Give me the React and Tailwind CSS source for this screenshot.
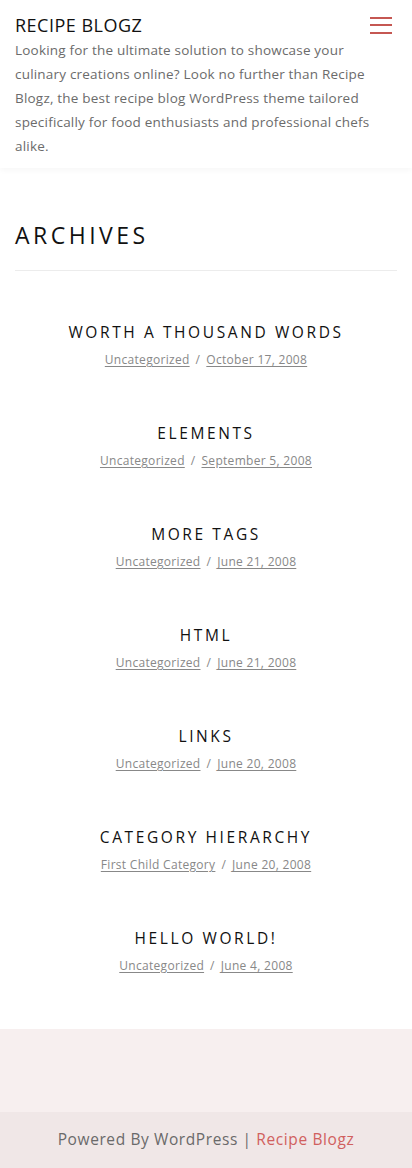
import React from "react";

const posts = [
  { title: "WORTH A THOUSAND WORDS", cat: "Uncategorized", date: "October 17, 2008" },
  { title: "ELEMENTS", cat: "Uncategorized", date: "September 5, 2008" },
  { title: "MORE TAGS", cat: "Uncategorized", date: "June 21, 2008" },
  { title: "HTML", cat: "Uncategorized", date: "June 21, 2008" },
  { title: "LINKS", cat: "Uncategorized", date: "June 20, 2008" },
  { title: "CATEGORY HIERARCHY", cat: "First Child Category", date: "June 20, 2008" },
  { title: "HELLO WORLD!", cat: "Uncategorized", date: "June 4, 2008" },
];

export default function App() {
  return (
    <div className="min-h-[1168px] bg-white flex flex-col" style={{ fontFamily: '"Open Sans", "Noto Sans", sans-serif' }}>
      <header className="bg-white px-[15px] pt-[13px] pb-[10px] shadow-[0_2px_6px_rgba(0,0,0,0.04)]">
        <div className="flex items-center justify-between h-[24px]">
          <span className="text-[18px] leading-[24px] tracking-[0.5px] text-[#111]">RECIPE BLOGZ</span>
          <button className="flex flex-col gap-[5.5px] w-[22px] mr-[5px]">
            <span className="block h-[2px] w-[22px] bg-[#c55752]"></span>
            <span className="block h-[2px] w-[22px] bg-[#c55752]"></span>
            <span className="block h-[2px] w-[22px] bg-[#c55752]"></span>
          </button>
        </div>
        <p className="mt-[1px] max-w-[358px] text-[13.5px] leading-[24px] tracking-[0.2px] text-[#6b6b6b]">
          Looking for the ultimate solution to showcase your culinary creations online? Look no further than Recipe Blogz, the best recipe blog WordPress theme tailored specifically for food enthusiasts and professional chefs alike.
        </p>
      </header>
      <main className="px-[15px] flex-1">
        <h1 className="mt-[51px] text-[23px] leading-[32px] tracking-[3.5px] text-[#111] pb-[19px] border-b border-[#ececec]">ARCHIVES</h1>
        <div className="mt-[49px] flex flex-col gap-[51px]">
          {posts.map((p) => (
            <article key={p.title} className="flex flex-col items-center">
              <h2 className="text-[15.5px] leading-[24px] tracking-[2.6px] text-[#111]">{p.title}</h2>
              <div className="mt-[6px] text-[12px] leading-[20px] tracking-[0.3px] text-[#888] flex items-center gap-[6px]">
                <a className="underline underline-offset-2">{p.cat}</a>
                <span>/</span>
                <a className="underline underline-offset-2">{p.date}</a>
              </div>
            </article>
          ))}
        </div>
      </main>
      <footer className="mt-[53px]">
        <div className="h-[83px] bg-[#f7efef]"></div>
        <div className="h-[56px] bg-[#f0e7e7] flex items-center justify-center text-[15.5px] tracking-[0.6px] text-[#6a6a6a]">
          <span>Powered By WordPress |&nbsp;</span>
          <span className="text-[#d0605e]">Recipe Blogz</span>
        </div>
      </footer>
    </div>
  );
}
